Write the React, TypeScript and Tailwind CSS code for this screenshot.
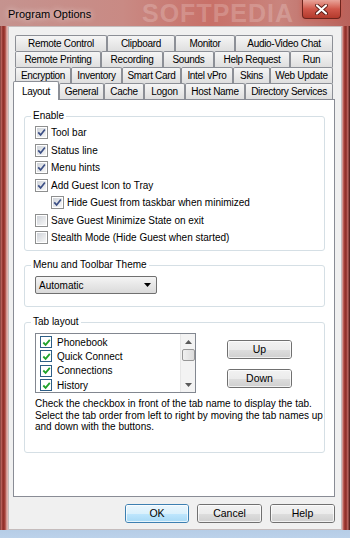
import React from "react";

const tabRows: [string, string][][] = [
  [
    ["Remote Control", "w-[92px]"],
    ["Clipboard", "w-[68px]"],
    ["Monitor", "w-[60px]"],
    ["Audio-Video Chat", "w-[98px]"],
  ],
  [
    ["Remote Printing", "w-[86px]"],
    ["Recording", "w-[62px]"],
    ["Sounds", "w-[51px]"],
    ["Help Request", "w-[76px]"],
    ["Run", "w-[43px]"],
  ],
  [
    ["Encryption", "w-[56px]"],
    ["Inventory", "w-[51px]"],
    ["Smart Card", "w-[59px]"],
    ["Intel vPro", "w-[52px]"],
    ["Skins", "w-[37px]"],
    ["Web Update", "w-[63px]"],
  ],
];

const lastRow: [string, string][] = [
  ["General", "w-[45px]"],
  ["Cache", "w-[40px]"],
  ["Logon", "w-[41px]"],
  ["Host Name", "w-[60px]"],
  ["Directory Services", "w-[88px]"],
];

function Tab({ label, w }: { label: string; w: string }) {
  return (
    <div
      className={`${w} h-[16px] flex items-center justify-center border border-b-0 border-[#8c8f96] rounded-t-[2px] bg-gradient-to-b from-[#f5f5f5] to-[#dfdfdf] text-[10px] tracking-[-0.3px] text-black whitespace-nowrap`}
    >
      {label}
    </div>
  );
}

function Check({ checked }: { checked: boolean }) {
  return (
    <span className="w-[13px] h-[13px] shrink-0 border border-[#8e8f8f] bg-white p-[1px] flex">
      <span className="flex-1 flex items-center justify-center bg-gradient-to-br from-[#cfd3d9] to-[#f7f7f7]">
        {checked && (
          <svg width="9" height="9" viewBox="0 0 9 9">
            <path d="M1.2 4.4 L3.6 6.9 L7.9 1.4" stroke="#3c4f85" strokeWidth="1.7" fill="none" />
          </svg>
        )}
      </span>
    </span>
  );
}

function GreenCheck() {
  return (
    <span className="w-[12px] h-[12px] shrink-0 border border-[#2d5e86] bg-white flex items-center justify-center">
      <svg width="9" height="9" viewBox="0 0 9 9">
        <path d="M1.3 4.5 L3.6 6.8 L7.8 1.8" stroke="#1fa22a" strokeWidth="1.8" fill="none" />
      </svg>
    </span>
  );
}

function Group({ label, className, children }: { label: string; className: string; children: React.ReactNode }) {
  return (
    <div className={`relative border border-[#d5dfe5] rounded-[3px] ${className}`}>
      <span className="absolute -top-[7px] left-[6px] bg-white px-[2px] text-[10px] leading-[12px]">{label}</span>
      {children}
    </div>
  );
}

function WinButton({ label, className, isDefault }: { label: string; className: string; isDefault?: boolean }) {
  return (
    <div
      className={`${className} relative rounded-[3px] border ${
        isDefault ? "border-[#3c7fb1]" : "border-[#707070]"
      } flex items-center justify-center text-[10.5px] overflow-hidden`}
    >
      <div className="absolute inset-0 flex flex-col">
        <div className={`flex-1 ${isDefault ? "bg-gradient-to-b from-[#eaf6fd] to-[#d9f0fc]" : "bg-gradient-to-b from-[#f2f2f2] to-[#ebebeb]"}`} />
        <div className={`flex-1 ${isDefault ? "bg-gradient-to-b from-[#bee6fd] to-[#a7d9f5]" : "bg-gradient-to-b from-[#dddddd] to-[#cfcfcf]"}`} />
      </div>
      <div className="absolute inset-0 border border-white/70 rounded-[2px]" />
      <span className="relative">{label}</span>
    </div>
  );
}

const enableItems: [string, boolean, boolean][] = [
  ["Tool bar", true, false],
  ["Status line", true, false],
  ["Menu hints", true, false],
  ["Add Guest Icon to Tray", true, false],
  ["Hide Guest from taskbar when minimized", true, true],
  ["Save Guest Minimize State on exit", false, false],
  ["Stealth Mode (Hide Guest when started)", false, false],
];

export default function App() {
  return (
    <div className="w-[350px] h-[538px] overflow-hidden flex flex-col font-['Liberation_Sans',Arial,sans-serif] text-black bg-[linear-gradient(180deg,#b45a53_0%,#a2433c_55%,#8c3f45_84%,#9db6d4_92%,#bcd2ea_100%)]">
      {/* Title bar */}
      <div className="relative h-[26px] shrink-0 flex items-start bg-[linear-gradient(90deg,#c5938f_0%,#c98a84_35%,#c87068_60%,#c9847d_80%,#b9625b_100%)]">
        <span className="absolute left-[142px] -top-[2px] text-[25px] font-bold tracking-[1px] text-white/20 leading-[30px] whitespace-nowrap">SOFTPEDIA</span>
        <span className="relative pl-[8px] pt-[8px] text-[11px] leading-[13px] [text-shadow:0_0_6px_rgba(255,255,255,0.9)]">
          Program Options
        </span>
        <div className="relative ml-auto mr-[9px] w-[39px] h-[19px] rounded-b-[4px] border border-t-0 border-[#6d241d] bg-gradient-to-b from-[#e8a49a] via-[#d0574a] to-[#b33a2c] flex items-center justify-center shadow-[0_0_4px_rgba(220,80,60,0.6)]">
          <svg width="13" height="11" viewBox="0 0 13 11">
            <path d="M2 1.5 L11 9.5 M11 1.5 L2 9.5" stroke="#5a1a14" strokeWidth="3.8" strokeLinecap="round" />
            <path d="M2 1.5 L11 9.5 M11 1.5 L2 9.5" stroke="#ffffff" strokeWidth="2.2" strokeLinecap="round" />
          </svg>
        </div>
      </div>

      <div className="flex flex-1">
        {/* left frame */}
        <div className="w-[8px] shrink-0 bg-[linear-gradient(90deg,#5b2420_0px,#c46e68_1px,#8c2c26_3px,#a8423b_5px,#e0b3ae_7px)]" />

        {/* client area */}
        <div className="w-[334px] h-[504px] bg-[#f0f0f0] border border-[#a99a9a]/60 flex flex-col">
          <div className="pt-[8px]">
            {tabRows.map((row, i) => (
              <div key={i} className="flex pl-[6px]">
                {row.map(([l, w]) => (
                  <Tab key={l} label={l} w={w} />
                ))}
              </div>
            ))}
            <div className="flex items-end pl-[4px] -mt-[2px] h-[19px] relative z-10">
              <div className="w-[46px] h-[19px] bg-white border border-b-0 border-[#8c8f96] rounded-t-[2px] flex items-start justify-center pt-[2px] text-[10px] tracking-[-0.3px]">
                Layout
              </div>
              {lastRow.map(([l, w]) => (
                <div key={l} className="mb-[1px]">
                  <Tab label={l} w={w} />
                </div>
              ))}
            </div>
          </div>

          {/* Panel */}
          <div className="ml-[4px] -mt-px w-[322px] h-[398px] border border-[#898c95] bg-white pl-[10px] pr-[9px] pt-[16px] flex flex-col">
            <Group label="Enable" className="h-[135px] pl-[10px] pt-[7px]">
              {enableItems.map(([label, checked, indent]) => (
                <div key={label} className={`h-[17.5px] flex items-center gap-[3px] text-[10px] ${indent ? "pl-[16px]" : ""}`}>
                  <Check checked={checked} />
                  <span>{label}</span>
                </div>
              ))}
            </Group>

            <Group label="Menu and Toolbar Theme" className="mt-[14px] h-[42px] pl-[10px] pt-[10px]">
              <div className="w-[122px] h-[18px] rounded-[2px] border border-[#707070] bg-gradient-to-b from-[#f4f4f4] to-[#dadada] flex items-center pl-[3px] pr-[5px] text-[10px]">
                <span className="flex-1">Automatic</span>
                <svg width="7" height="4" viewBox="0 0 7 4">
                  <path d="M0 0 H7 L3.5 4 Z" fill="#000" />
                </svg>
              </div>
            </Group>

            <Group label="Tab layout" className="mt-[15px] h-[131px] pl-[10px] pt-[10px] flex flex-col">
              <div className="flex">
                <div className="w-[161px] h-[60px] border border-[#828790] bg-white flex">
                  <div className="flex-1 pl-[4px] pt-[1px]">
                    {["Phonebook", "Quick Connect", "Connections", "History"].map((t) => (
                      <div key={t} className="h-[14.3px] flex items-center gap-[5px] text-[10px]">
                        <GreenCheck />
                        <span>{t}</span>
                      </div>
                    ))}
                  </div>
                  <div className="w-[15px] bg-[#f3f3f3] border-l border-[#e6e6e6] flex flex-col items-center">
                    <div className="h-[15px] flex items-center justify-center">
                      <svg width="7" height="4" viewBox="0 0 7 4">
                        <path d="M0 4 H7 L3.5 0 Z" fill="#5a5a5a" />
                      </svg>
                    </div>
                    <div className="w-[13px] h-[12px] rounded-[2px] border border-[#979797] bg-gradient-to-r from-[#f0f0f0] to-[#dcdcdc]" />
                    <div className="flex-1" />
                    <div className="h-[15px] flex items-center justify-center">
                      <svg width="7" height="4" viewBox="0 0 7 4">
                        <path d="M0 0 H7 L3.5 4 Z" fill="#5a5a5a" />
                      </svg>
                    </div>
                  </div>
                </div>
                <div className="ml-[31px] pt-[7px] flex flex-col gap-[10px]">
                  <WinButton label="Up" className="w-[65px] h-[19px]" />
                  <WinButton label="Down" className="w-[65px] h-[19px]" />
                </div>
              </div>
              <p className="mt-[5px] text-[10px] leading-[11.5px]">
                Check the checkbox in front of the tab name to display the tab.
                <br />
                Select the tab order from left to right by moving the tab names up
                <br />
                and down with the buttons.
              </p>
            </Group>
          </div>

          {/* bottom buttons */}
          <div className="flex justify-end gap-[8px] pr-[6px] mt-[7px]">
            <WinButton label="OK" className="w-[64px] h-[19px]" isDefault />
            <WinButton label="Cancel" className="w-[65px] h-[19px]" />
            <WinButton label="Help" className="w-[65px] h-[19px]" />
          </div>
        </div>

        {/* right frame */}
        <div className="w-[8px] shrink-0 bg-[linear-gradient(90deg,#e0b3ae_0px,#a8423b_2px,#8c2c26_4px,#c46e68_6px,#5b2420_7px)]" />
      </div>
      <div className="h-[8px] shrink-0" />
    </div>
  );
}
